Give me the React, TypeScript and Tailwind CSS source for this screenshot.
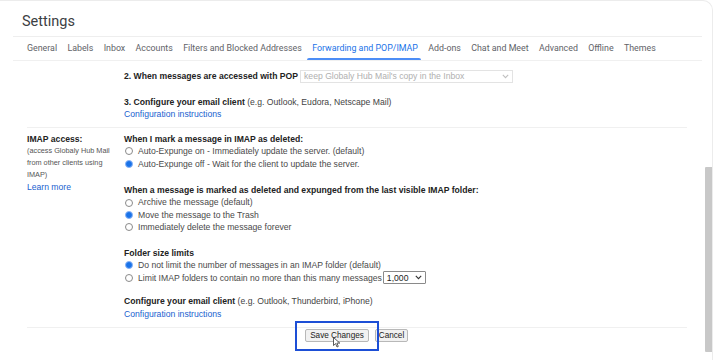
import React from "react";

const Radio = ({ checked }: { checked?: boolean }) =>
  checked ? (
    <span className="inline-flex w-[8px] h-[8px] rounded-full bg-[#1a73e8] border border-[#8ab4f8] shrink-0 items-center justify-center">
      <span className="w-[4px] h-[4px] rounded-full bg-[#1a73e8]" />
    </span>
  ) : (
    <span className="inline-block w-[8px] h-[8px] rounded-full border border-[#8a8a8a] bg-white shrink-0" />
  );

const RadioRow = ({ checked, children }: { checked?: boolean; children: React.ReactNode }) => (
  <div className="flex items-center h-[12.4px] gap-[5px] pl-[1px] text-[#4a4a4a]">
    <Radio checked={checked} />
    <span className="whitespace-nowrap flex items-center">{children}</span>
  </div>
);

const Chevron = ({ color }: { color: string }) => (
  <svg width="7" height="5" viewBox="0 0 7 5">
    <path d="M0.8 0.8 L3.5 3.6 L6.2 0.8" fill="none" stroke={color} strokeWidth="1.1" />
  </svg>
);

export default function App() {
  const tabs = [
    "General",
    "Labels",
    "Inbox",
    "Accounts",
    "Filters and Blocked Addresses",
    "Forwarding and POP/IMAP",
    "Add-ons",
    "Chat and Meet",
    "Advanced",
    "Offline",
    "Themes",
  ];
  return (
    <div className="relative w-[721px] h-[360px] overflow-hidden bg-white">
      <div className="w-[713px] h-[372px] border-t border-r border-[#ececec] rounded-tr-[10px]">
        <div className="pl-[22px] pt-[12px] h-[35px] text-[14.5px] text-[#3c4043] font-['Roboto',sans-serif] leading-[18px]">
          Settings
        </div>
        <div className="ml-[13px] mr-[10px] border-t border-[#eeeeee]" />
        <div className="ml-[13px] mr-[10px] flex items-stretch h-[24px] pl-[14px] gap-[10.3px] font-['Roboto',sans-serif] text-[8.85px] text-[#5f6368] border-b border-[#f0f0f0]">
          {tabs.map((t) => (
            <div
              key={t}
              className={
                t === "Forwarding and POP/IMAP"
                  ? "relative flex items-center text-[#1a73e8] whitespace-nowrap"
                  : "flex items-center whitespace-nowrap"
              }
            >
              {t}
              {t === "Forwarding and POP/IMAP" && (
                <span className="absolute left-[-5px] right-[-3px] bottom-0 h-[2px] rounded-t-[2px] bg-[#4c8df6]" />
              )}
            </div>
          ))}
        </div>

        <div className="font-['Liberation_Sans',Arial,sans-serif] text-[8.65px] leading-[12.4px] text-[#444]">
          {/* POP section tail */}
          <div className="ml-[27px] mr-[25px] border-b border-[#f0f0f0] pl-[97px] pt-[9px] pb-[6px]">
            <div className="flex items-center h-[13px] gap-[2px]">
              <span className="font-bold text-[#222]">2. When messages are accessed with POP</span>
              <div className="flex items-center justify-between w-[213px] h-[13px] border border-[#e3e3e3] px-[3px] text-[#b0b0b0]">
                <span>keep Globaly Hub Mail's copy in the Inbox</span>
                <Chevron color="#c0c0c0" />
              </div>
            </div>
            <div className="mt-[13px]">
              <span className="font-bold text-[#222]">3. Configure your email client</span>{" "}
              <span className="text-[#444]">(e.g. Outlook, Eudora, Netscape Mail)</span>
            </div>
            <div className="text-[#1a5fcf]">Configuration instructions</div>
          </div>

          {/* IMAP section */}
          <div className="ml-[27px] mr-[25px] border-b border-[#f0f0f0] flex pt-[5px] pb-[7px]">
            <div className="w-[97px] shrink-0">
              <div className="font-bold text-[#222]">IMAP access:</div>
              <div className="text-[7.3px] leading-[12px] text-[#555]">
                <div>(access Globaly Hub Mail</div>
                <div>from other clients using</div>
                <div>IMAP)</div>
              </div>
              <div className="text-[#1a5fcf] text-[8.6px] leading-[12px]">Learn more</div>
            </div>
            <div className="flex-1">
              <div className="font-bold text-[#222]">When I mark a message in IMAP as deleted:</div>
              <RadioRow>Auto-Expunge on - Immediately update the server. (default)</RadioRow>
              <RadioRow checked>Auto-Expunge off - Wait for the client to update the server.</RadioRow>

              <div className="mt-[14px] font-bold text-[#222]">
                When a message is marked as deleted and expunged from the last visible IMAP folder:
              </div>
              <RadioRow>Archive the message (default)</RadioRow>
              <RadioRow checked>Move the message to the Trash</RadioRow>
              <RadioRow>Immediately delete the message forever</RadioRow>

              <div className="mt-[13px] font-bold text-[#222]">Folder size limits</div>
              <RadioRow checked>Do not limit the number of messages in an IMAP folder (default)</RadioRow>
              <div className="flex items-center h-[13px] gap-[5px] pl-[1px] text-[#4a4a4a]">
                <Radio />
                <span className="whitespace-nowrap">Limit IMAP folders to contain no more than this many messages</span>
                <div className="-ml-[4px] flex items-center justify-between w-[43px] h-[13px] border border-[#8a8a8a] rounded-[1px] px-[3px] text-[#222]">
                  <span>1,000</span>
                  <Chevron color="#333" />
                </div>
              </div>

              <div className="mt-[11px]">
                <span className="font-bold text-[#222]">Configure your email client</span>{" "}
                <span>(e.g. Outlook, Thunderbird, iPhone)</span>
              </div>
              <div className="text-[#1a5fcf]">Configuration instructions</div>
            </div>
          </div>

          {/* Buttons */}
          <div className="flex items-center pl-[305px] pt-[1px] gap-[6px]">
            <button className="h-[13px] w-[64px] border border-[#b8b8b8] rounded-[2px] bg-[#f1f1f1] text-[8.2px] leading-[11px] text-[#222]">
              Save Changes
            </button>
            <button className="h-[13px] w-[33px] border border-[#b8b8b8] rounded-[2px] bg-[#f1f1f1] text-[8.2px] leading-[11px] text-[#222]">
              Cancel
            </button>
          </div>
        </div>
      </div>

      {/* highlight box */}
      <div className="absolute left-[295px] top-[321px] w-[84px] h-[30px] border-[2.5px] border-[#1d4fd6]" />

      {/* cursor */}
      <svg className="absolute left-[333px] top-[337px]" width="8" height="11" viewBox="0 0 8 11">
        <path d="M0.5 0.5 L0.5 8.5 L2.6 6.6 L4 10 L5.3 9.4 L3.9 6.1 L6.8 6.1 Z" fill="#fff" stroke="#333" strokeWidth="0.8" />
      </svg>

      {/* scrollbar */}
      <div className="absolute left-[705px] top-[167px] w-[7px] h-[185px] bg-[#c8c8c8] rounded-l-[1px]" />
    </div>
  );
}
